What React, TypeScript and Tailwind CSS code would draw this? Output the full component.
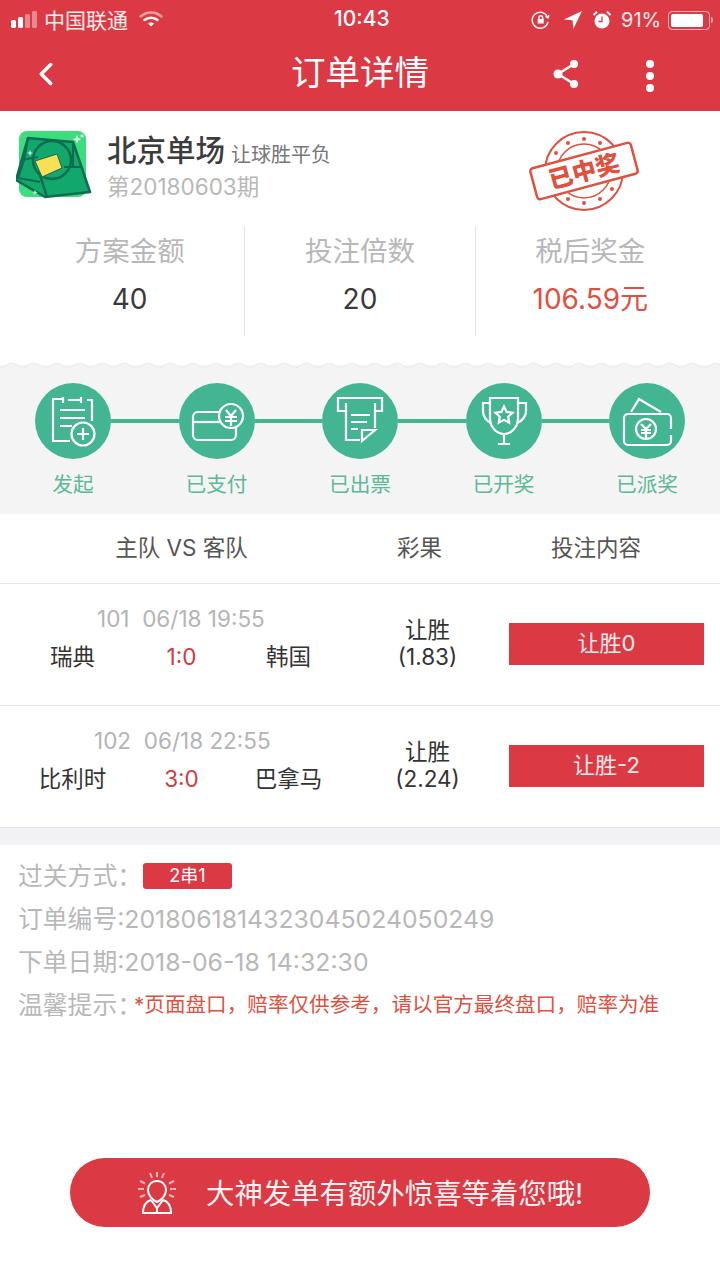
import React from 'react';
import { ChevronLeft } from 'lucide-react';

const FONT = 'font-["Inter","Noto_Sans_CJK_SC",sans-serif]';

const StatusBar = () => (
  <div className="h-10 flex items-center relative text-white text-[21px] leading-none">
    <div className="flex items-end gap-[2px] ml-[11px] w-[28px] h-[17px] -mt-[2px]">
      <span className="w-[5px] h-[8px] rounded-[1.5px] bg-white" />
      <span className="w-[5px] h-[11px] rounded-[1.5px] bg-white" />
      <span className="w-[5px] h-[14px] rounded-[1.5px] bg-white/40" />
      <span className="w-[5px] h-[17px] rounded-[1.5px] bg-white/40" />
    </div>
    <span className="ml-[5px] text-white/90">中国联通</span>
    <svg className="ml-[11px] -mt-[3px]" width="24" height="18" viewBox="0 0 24 18" fill="none" strokeLinecap="round">
      <path d="M1.500 6.500C7.500 1 16.500 1 22.500 6.500" stroke="#fff" strokeOpacity=".5" strokeWidth="2.500" />
      <path d="M5.500 10C9 7 15 7 18.500 10" stroke="#fff" strokeWidth="2.500" />
      <path d="M9 13.500C10.500 12.300 13.500 12.300 15 13.500L12 16.500Z" fill="#fff" />
    </svg>
    <span className="absolute left-[334px] top-[8px] font-medium">10:43</span>
    <div className="ml-auto flex items-center">
      <svg width="20" height="20" viewBox="0 0 20 20" fill="none" stroke="#fff" strokeWidth="1.400">
        <path d="M16.500 7A8 8 0 1 0 17 12" />
        <path d="M14.500 6.500l2.500 1.500 1-2.700" />
        <rect x="6.700" y="9" width="6" height="4.500" fill="#fff" stroke="none" />
        <path d="M8 9V7.500a1.800 1.800 0 0 1 3.600 0V9" />
      </svg>
      <svg className="ml-[12px]" width="20" height="20" viewBox="0 0 20 20" fill="#fff">
        <path d="M19 1 1 9.500l8.500.8.800 8.700Z" />
      </svg>
      <svg className="ml-[9px]" width="20" height="20" viewBox="0 0 20 20">
        <circle cx="10" cy="11" r="7.500" fill="#fff" />
        <path d="M10 6.500V11.500H6.500" stroke="#db3a44" strokeWidth="1.300" fill="none" />
        <path d="M1.500 5 5 1.800M18.500 5 15 1.800" stroke="#fff" strokeWidth="2" />
      </svg>
      <span className="ml-[9px] w-[41px] whitespace-nowrap text-white/90 text-[20px]">91%</span>
      <div className="ml-[6px] w-[42px] h-[19px] rounded-[4px] border border-white/60 p-[2px]">
        <div className="w-[90%] h-full bg-white rounded-[2px]" />
      </div>
      <span className="w-[2px] h-[6px] bg-white/50 rounded-r-sm ml-[1px] mr-[7px]" />
    </div>
  </div>
);

const Header = () => (
  <div className="h-[71px] flex items-center relative pb-[4px]">
    <ChevronLeft className="ml-[27px] text-white" size={38} strokeWidth={2.200} />
    <span className="absolute left-0 right-0 top-[9px] text-center text-white text-[34.500px] leading-[48px]">订单详情</span>
    <svg className="ml-auto mr-[-2px]" width="30" height="34" viewBox="0 0 30 34" fill="#fff" stroke="#fff" strokeWidth="2.500">
      <path d="M23 7 7 17l16 10" fill="none" />
      <circle cx="23" cy="7" r="4" stroke="none" />
      <circle cx="7" cy="17" r="4.500" stroke="none" />
      <circle cx="23" cy="27" r="4" stroke="none" />
    </svg>
    <div className="ml-[67px] mr-[66px] flex flex-col gap-[4px] mt-[4px]">
      <span className="w-[8px] h-[8px] rounded-full bg-white" />
      <span className="w-[8px] h-[8px] rounded-full bg-white" />
      <span className="w-[8px] h-[8px] rounded-full bg-white" />
    </div>
  </div>
);

const Logo = () => (
  <svg width="76" height="70" viewBox="-1 0 76 70" className="shrink-0 -ml-[2px]">
    <rect x="2" y="1" width="67" height="66" rx="8" fill="#3ddc7c" />
    <path d="M11 8 56 12 73 62 28 67-1 50Z" fill="#12a86c" stroke="#0d6d50" strokeWidth="2.500" strokeLinejoin="round" />
    <path d="M11 8 7 30 1 48M5 30 21 27M1 48 23 52M56 12 56 37 65 37M47 37 65 37" stroke="#0d6d50" strokeWidth="2.200" fill="none" />
    <circle cx="35" cy="30" r="19" fill="none" stroke="#0d6d50" strokeWidth="2.500" />
    <path d="M18 31 40 24 45 38 25 47Z" fill="#f8df56" stroke="#0d6d50" strokeWidth="1" />
    <path d="M23 45 30 67" stroke="#0d6d50" strokeWidth="2.500" />
    <path d="M60 5l1.200 3 3 1.200-3 1.200-1.200 3-1.200-3-3-1.200 3-1.200Z" fill="#d9fbe6" />
    <path d="M65 3.500l.8 1.700 1.700.8-1.700.8-.8 1.700-.8-1.700-1.700-.8 1.700-.8Z" fill="#d9fbe6" />
    <path d="M13 20l.8 2.200 2.200.8-2.200.8-.8 2.200-.8-2.200-2.200-.8 2.200-.8Z" fill="#d9fbe6" />
    <path d="M18 60l.7 1.800 1.800.7-1.800.7-.7 1.800-.7-1.800-1.800-.7 1.800-.7Z" fill="#d9fbe6" />
  </svg>
);

const Stamp = () => (
  <svg width="112" height="84" viewBox="0 0 112 84" fill="none" className="shrink-0">
    <circle cx="56" cy="42" r="39" stroke="#e0503f" strokeWidth="2" />
    <circle cx="56" cy="42" r="27" stroke="#e0503f" strokeWidth="1.500" />
    {[[56, 10], [40, 14], [72, 14], [28, 24], [84, 24], [56, 74], [40, 70], [72, 70], [28, 60], [84, 60]].map(([x, y]) => (
      <circle key={`${x}-${y}`} cx={x} cy={y} r="2" fill="#e0503f" />
    ))}
    <g transform="rotate(-15 56 42)">
      <rect x="4" y="26" width="104" height="32" rx="3" fill="#fff" stroke="#e0503f" strokeWidth="2.500" />
      <text x="56" y="51" textAnchor="middle" fontSize="24" fontWeight="900" fill="#e0503f" fontFamily="'Noto Sans CJK SC',sans-serif">已中奖</text>
    </g>
  </svg>
);

const Stat = ({ label, value, red }: { label: string; value: string; red?: boolean }) => (
  <div className="flex-1 flex flex-col items-center border-r last:border-r-0 border-[#e3e3e3] h-[110px]">
    <span className="mt-[7px] text-[27.500px] leading-[36px] text-[#b8b8b8]">{label}</span>
    <span className={`mt-[12px] text-[28px] leading-[36px] ${red ? 'text-[#e0503f]' : 'text-[#3a3a3a]'}`}>{value}</span>
  </div>
);

const Scallop = () => (
  <svg width="720" height="8" className="block absolute left-0 top-[-3px]">
    <defs>
      <pattern id="scallop" width="22.700" height="8" patternUnits="userSpaceOnUse">
        <path d="M0 6C4 6 6 1 11.350 1S18.700 6 22.700 6V8H0Z" fill="#f4f4f4" />
        <path d="M0 6C4 6 6 1 11.350 1S18.700 6 22.700 6" fill="none" stroke="#ececec" strokeWidth="1" />
      </pattern>
    </defs>
    <rect width="720" height="8" fill="url(#scallop)" />
  </svg>
);

const icons = [
  <g key="a">
    <path d="M27 16h-9v42h17M28 14v6M33 17h12M46 14v6M52 17h5v21" />
    <path d="M25 27h25M25 35h25M25 43h12" />
    <circle cx="48" cy="51" r="11.500" />
    <path d="M48 45v12M42 51h12" />
  </g>,
  <g key="b">
    <path d="M42 29H19a5 5 0 0 0-5 5v18a5 5 0 0 0 5 5h33a5 5 0 0 0 5-5V45" />
    <path d="M14 39h27" />
    <circle cx="52" cy="33" r="12" />
    <path d="M47 27l5 6 5-6M46 34h12M46 38h12M52 33v10" />
  </g>,
  <g key="c">
    <path d="M24 28h-8V15h44v13h-7" />
    <path d="M24 20v37h14M53 20v25" />
    <path d="M29 32h19M29 39h16M29 46h7" />
    <path d="M40 47h13L40 58Z" />
  </g>,
  <g key="d">
    <path d="M24 15h28v20a14 16 0 0 1-28 0Z" />
    <path d="M24 20h-7v8q0 8 8 12M52 20h8v8q0 8-9 12" />
    <path d="M38 51v10M32 61h12" />
    <path d="M38 23.500l2.600 5.400 5.900.8-4.300 4.100 1 5.900-5.200-2.800-5.200 2.800 1-5.900-4.300-4.100 5.900-.8Z" />
  </g>,
  <g key="e">
    <path d="M22 29l8-13 22 13" />
    <path d="M62 46V35a4 4 0 0 0-4-4H19a4 4 0 0 0-4 4v23a4 4 0 0 0 4 4h39a4 4 0 0 0 4-4v-6" />
    <circle cx="37" cy="46" r="10" />
    <path d="M32 41l5 5 5-5M32 47h10M32 50h10M37 46v9" />
  </g>,
];

const Steps = () => (
  <div className="relative bg-[#f4f4f4] h-[149px] pt-[18px]">
    <Scallop />
    <div className="flex items-center px-[35px]">
      {icons.map((icon, i) => (
        <React.Fragment key={i}>
          {i > 0 && <span className="flex-1 h-[4px] bg-[#44b592]" />}
          <div className="w-[76px] h-[76px] rounded-full bg-[#44b592] shrink-0">
            <svg width="76" height="76" viewBox="0 0 76 76" fill="none" stroke="#fff" strokeWidth="2.200">{icon}</svg>
          </div>
        </React.Fragment>
      ))}
    </div>
    <div className="flex justify-between px-[35px] mt-[11px]">
      {['发起', '已支付', '已出票', '已开奖', '已派奖'].map((label) => (
        <span key={label} className="w-[76px] flex justify-center whitespace-nowrap text-[20.700px] leading-[30px] text-[#5cb998]">{label}</span>
      ))}
    </div>
  </div>
);

const MatchRow = ({ num, date, home, score, away, odd, oddValue, pick, numClass }: {
  num: string; date: string; home: string; score: string; away: string; odd: string; oddValue: string; pick: string; numClass: string;
}) => (
  <div className="h-[122px] border-b border-[#e6e6e6] flex items-center">
    <div className="w-[363px] shrink-0 -mt-[13px]">
      <div className={`text-[22.500px] leading-[28px] text-[#b4b4b4] whitespace-nowrap ${numClass}`}>{num}&nbsp; {date}</div>
      <div className="flex items-center mt-[9px] text-[22.500px] leading-[30px] text-[#333]">
        <span className="w-[145px] text-center">{home}</span>
        <span className="w-[73px] text-center text-[#cf3b40]">{score}</span>
        <span className="w-[141px] text-center">{away}</span>
      </div>
    </div>
    <div className="w-[129px] shrink-0 text-center text-[22.500px] leading-[27px] text-[#333] -mt-[4px]">
      <div>{odd}</div>
      <div>{oddValue}</div>
    </div>
    <div className="ml-[17px] w-[195px] h-[42px] -mt-[2px] bg-[#db3a44] flex items-center justify-center text-white/90 text-[22px]">{pick}</div>
  </div>
);

const InfoRow = ({ label, children }: { label: string; children?: React.ReactNode }) => (
  <div className="h-[43px] flex items-center text-[#b8b8b8] text-[24.800px] whitespace-nowrap">
    <span>{label}</span>
    {children}
  </div>
);

export default function App() {
  return (
    <div className={`w-[720px] h-[1280px] bg-white overflow-hidden flex flex-col ${FONT}`}>
      <div className="bg-[#db3a44]">
        <StatusBar />
        <Header />
      </div>

      <div className="h-[254px] px-[18px] pt-[19px]">
        <div className="flex h-[88px]">
          <Logo />
          <div className="ml-[15px] -mt-[5px]">
            <div className="flex items-end h-[40px] leading-none">
              <span className="text-[29.500px] font-medium text-[#3c3c3c]">北京单场</span>
              <span className="ml-[6px] text-[20px] text-[#777]">让球胜平负</span>
            </div>
            <div className="text-[22.500px] leading-[32px] mt-[6px] text-[#b8b8b8]">第20180603期</div>
          </div>
          <div className="ml-auto mr-[62px] -mt-[1px]">
            <Stamp />
          </div>
        </div>
        <div className="flex -mx-[3px] mt-[8px] w-[690px]">
          <Stat label="方案金额" value="40" />
          <Stat label="投注倍数" value="20" />
          <Stat label="税后奖金" value="106.59元" red />
        </div>
      </div>

      <Steps />

      <div className="h-[70px] border-b border-[#e6e6e6] pb-[1px] flex items-center text-[22.500px] text-[#555]">
        <span className="w-[363px] text-center">主队 VS 客队</span>
        <span className="w-[113px] text-center">彩果</span>
        <span className="w-[244px] text-center pr-[4px]">投注内容</span>
      </div>

      <MatchRow num="101" date="06/18 19:55" home="瑞典" score="1:0" away="韩国" odd="让胜" oddValue="(1.83)" pick="让胜0" numClass="pl-[97px]" />
      <MatchRow num="102" date="06/18 22:55" home="比利时" score="3:0" away="巴拿马" odd="让胜" oddValue="(2.24)" pick="让胜-2" numClass="pl-[94px]" />

      <div className="h-[17px] bg-[#f1f1f6]" />

      <div className="px-[18px] pt-[10px]">
        <InfoRow label="过关方式：">
          <span className="ml-[1px] -mt-[2px] w-[89px] h-[26px] rounded-[3px] bg-[#db3a44] text-white text-[18px] flex items-center justify-center">2串1</span>
        </InfoRow>
        <InfoRow label="订单编号:2018061814323045024050249" />
        <InfoRow label="下单日期:2018-06-18 14:32:30" />
        <InfoRow label="温馨提示：">
          <span className="-ml-[8px] text-[20.600px] text-[#e0503f]">*页面盘口，赔率仅供参考，请以官方最终盘口，赔率为准</span>
        </InfoRow>
      </div>

      <div className="mt-auto mb-[53px] mx-[70px] h-[69px] rounded-full bg-[#db3a44] flex items-center pl-[65px] text-white/95 text-[28.400px]">
        <svg width="44" height="46" viewBox="0 0 44 46" fill="none" stroke="#fff" strokeWidth="2" className="shrink-0">
          <path d="M22 11c5.500 0 9 4 9 9 0 5-4 10-9 12-5-2-9-7-9-12 0-5 3.500-9 9-9Z" />
          <path d="M16 30c-5 1.500-8 5-8 13h28c0-8-3-11.500-8-13" />
          <path d="M16 30l6 8 6-8M22 38v5" />
          <g stroke="#f6b6ba">
            <path d="M15 3l2 5M22 2v5M29 3l-2 5M5 11l5 2.500M39 11l-5 2.500M3 19h6M41 19h-6M5 27l5-2M39 27l-5-2" />
          </g>
        </svg>
        <span className="ml-[27px] mt-[3px] whitespace-nowrap">大神发单有额外惊喜等着您哦!</span>
      </div>
    </div>
  );
}
